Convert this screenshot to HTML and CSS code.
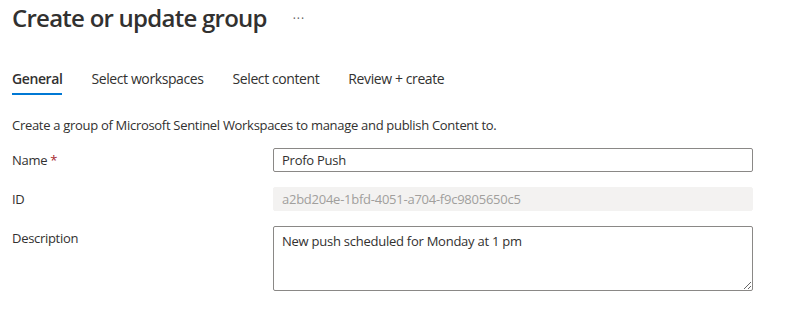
FILE: index.html
```html
<!DOCTYPE html>
<html lang="en">
<head>
    <meta charset="UTF-8">
    <meta name="viewport" content="width=device-width, initial-scale=1.0">
    <title>Create or update group</title>
    <link rel="stylesheet" href="styles.css">
</head>
<body>
    <div class="page">
        <!-- Header -->
        <div class="header">
            <h1 class="title">Create or update group</h1>
            <span class="more">&middot;&middot;&middot;</span>
        </div>

        <!-- Tabs -->
        <div class="tabs">
            <div class="tab active">General</div>
            <div class="tab">Select workspaces</div>
            <div class="tab">Select content</div>
            <div class="tab">Review + create</div>
        </div>

        <p class="intro">Create a group of Microsoft Sentinel Workspaces to manage and publish Content to.</p>

        <!-- Form -->
        <div class="form">
            <div class="row">
                <label class="label" for="name">Name <span class="required">*</span></label>
                <input id="name" class="field" type="text" value="Profo Push">
            </div>
            <div class="row">
                <label class="label" for="group-id">ID</label>
                <input id="group-id" class="field disabled" type="text" value="a2bd204e-1bfd-4051-a704-f9c9805650c5" disabled>
            </div>
            <div class="row">
                <label class="label" for="description">Description</label>
                <textarea id="description" class="field area">New push scheduled for Monday at 1 pm</textarea>
            </div>
        </div>
    </div>
</body>
</html>
```

FILE: styles.css
```css
body {
    margin: 0;
    font-family: "Open Sans", "Noto Sans", sans-serif;
    color: #323130;
    background: #fff;
}
.page {
    padding: 0 12px;
}
.header {
    display: flex;
    align-items: center;
    height: 36px;
}
.title {
    margin: 0;
    font-size: 24px;
    font-weight: 600;
    line-height: 36px;
    letter-spacing: -0.75px;
}
.more {
    margin-left: 26px;
    font-size: 12px;
    color: #605e5c;
    letter-spacing: 1px;
}
.tabs {
    display: flex;
    gap: 29px;
    margin-top: 33px;
}
.tab {
    font-size: 14px;
    line-height: 20px;
    letter-spacing: -0.4px;
    padding-bottom: 4px;
    border-bottom: 2px solid transparent;
}
.tab.active {
    font-weight: 600;
    border-bottom-color: #0078d4;
}
.intro {
    margin: 20px 0 13px 0;
    font-size: 13px;
    line-height: 20px;
    letter-spacing: -0.3px;
}
.form {
    display: flex;
    flex-direction: column;
    gap: 15px;
}
.row {
    display: flex;
    align-items: flex-start;
}
.label {
    width: 261px;
    padding-top: 2px;
    font-size: 13px;
    line-height: 20px;
    letter-spacing: -0.3px;
}
.required {
    color: #a4262c;
}
.field {
    box-sizing: border-box;
    width: 480px;
    height: 24px;
    margin: 0;
    padding: 0 8px;
    border: 1px solid #8a8886;
    border-radius: 2px;
    font-family: inherit;
    font-size: 13px;
    letter-spacing: -0.25px;
    color: #323130;
    background: #fff;
}
.field.disabled {
    border-color: #f3f2f1;
    background: #f3f2f1;
    color: #a19f9d;
}
.area {
    height: 65px;
    padding: 5px 8px;
    line-height: 18px;
    resize: vertical;
}
```
